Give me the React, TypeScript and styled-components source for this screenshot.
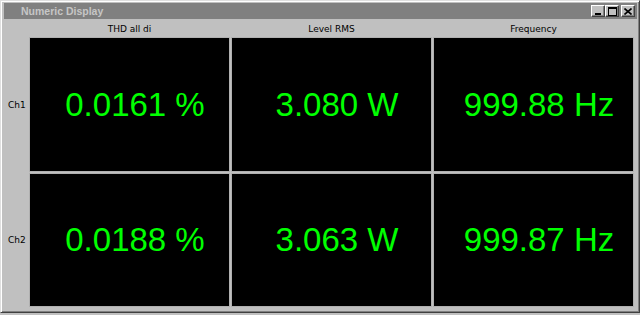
import React, { FunctionComponent } from 'react'
import styled, { createGlobalStyle } from 'styled-components'

const GlobalStyle = createGlobalStyle`
	html, body
	{
		margin: 0;
		padding: 0;
		background: #c0c0c0;
		font-family: "DejaVu Sans", sans-serif;
	}
`


const Window = styled.div`
	box-sizing: border-box;
	width: 640px;
	height: 313px;
	background: #c0c0c0;
	border-top: 1px solid #dfdfdf;
	border-left: 1px solid #dfdfdf;
	border-right: 1px solid #404040;
	border-bottom: 1px solid #404040;
	box-shadow: inset 1px 1px 0 #ffffff, inset -1px -1px 0 #808080;
	padding: 2px;
	display: flex;
	flex-direction: column;
`


const TitleBar = styled.div`
	height: 16px;
	background: #808080;
	display: flex;
	align-items: center;
	padding: 0 2px 0 17px;
	margin-left: 1px;
`


const Title = styled.span`
	flex: 1;
	color: #c6c6c6;
	font-family: "Liberation Sans", sans-serif;
	font-weight: bold;
	font-size: 10.5px;
`


const Buttons = styled.div`
	display: flex;
	align-items: center;
`


const CaptionButton = styled.div<{ $gap?: number }>`
	box-sizing: border-box;
	width: 14px;
	height: 12px;
	margin-left: ${p => p.$gap ?? 0}px;
	background: #c0c0c0;
	border-top: 1px solid #ffffff;
	border-left: 1px solid #ffffff;
	border-right: 1px solid #404040;
	border-bottom: 1px solid #404040;
	box-shadow: inset -1px -1px 0 #808080;
	display: flex;
	align-items: center;
	justify-content: center;
`


const Grid = styled.div`
	flex: 1;
	display: grid;
	grid-template-columns: 24px 199px 199px 199px;
	grid-template-rows: 15px 133px 132px;
	column-gap: 3px;
	row-gap: 3px;
	margin-top: 1px;
	align-content: start;
`


const ColHeader = styled.div`
	display: flex;
	align-items: center;
	justify-content: center;
	font-family: "DejaVu Sans", sans-serif;
	font-size: 9px;
	color: #000;
	padding-top: 3px;
`


const RowLabel = styled.div`
	display: flex;
	align-items: center;
	padding-left: 5px;
	font-family: "DejaVu Sans", sans-serif;
	font-size: 9px;
	color: #000;
`


const Cell = styled.div`
	background: #000;
	outline: 1px solid #b0b0b0;
	display: flex;
	align-items: center;
	justify-content: center;
	padding-left: 11px;
	color: #00ff00;
	font-family: "Liberation Sans", sans-serif;
	font-size: 33px;
	white-space: nowrap;
`


const Minimize = () => (
	<svg width='8' height='8' viewBox='0 0 8 8'>
		<rect x='1' y='6' width='6' height='2' fill='#000' />
	</svg>
)

const Maximize = () => (
	<svg width='9' height='9' viewBox='0 0 9 9'>
		<rect x='0.5' y='0.5' width='8' height='8' fill='none' stroke='#000' />
		<rect x='0' y='0' width='9' height='2' fill='#000' />
	</svg>
)

const Close = () => (
	<svg width='8' height='7' viewBox='0 0 8 7'>
		<path d='M0.5 0.5 L7.5 6.5 M7.5 0.5 L0.5 6.5' stroke='#000' strokeWidth='1.6' />
	</svg>
)


const columns = ['THD all di', 'Level RMS', 'Frequency']

const rows = [
	{ label: 'Ch1', values: ['0.0161 %', '3.080 W', '999.88 Hz'] },
	{ label: 'Ch2', values: ['0.0188 %', '3.063 W', '999.87 Hz'] },
]


const App: FunctionComponent = () => (
	<>
		<GlobalStyle />
		<Window>
			<TitleBar>
				<Title>Numeric Display</Title>
				<Buttons>
					<CaptionButton><Minimize /></CaptionButton>
					<CaptionButton><Maximize /></CaptionButton>
					<CaptionButton $gap={2}><Close /></CaptionButton>
				</Buttons>
			</TitleBar>
			<Grid>
				<div />
				{columns.map(c => <ColHeader key={c}>{c}</ColHeader>)}
				{rows.map(r => (
					<React.Fragment key={r.label}>
						<RowLabel>{r.label}</RowLabel>
						{r.values.map(v => <Cell key={v}>{v}</Cell>)}
					</React.Fragment>
				))}
			</Grid>
		</Window>
	</>
)


export default App
